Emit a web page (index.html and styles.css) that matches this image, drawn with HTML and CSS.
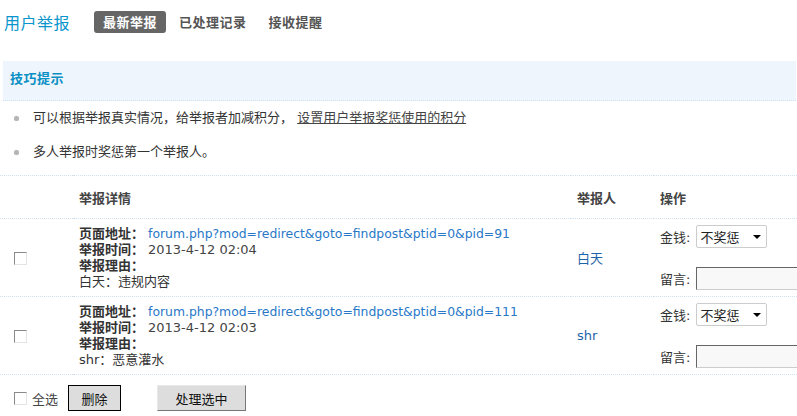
FILE: index.html
```html
<!DOCTYPE html>
<html lang="zh-CN">
<head>
  <meta charset="UTF-8" />
  <title>用户举报</title>
  <link rel="stylesheet" href="styles.css">
</head>
<body>
  <header class="topbar">
    <span class="title">用户举报</span>
    <nav class="tabs">
      <a href="#" class="tab active">最新举报</a>
      <a href="#" class="tab">已处理记录</a>
      <a href="#" class="tab">接收提醒</a>
    </nav>
  </header>

  <div class="tips">技巧提示</div>
  <ul class="tip-list">
    <li>可以根据举报真实情况，给举报者加减积分，&nbsp;<a href="#">设置用户举报奖惩使用的积分</a></li>
    <li>多人举报时奖惩第一个举报人。</li>
  </ul>

  <table class="reports">
    <colgroup>
      <col class="c-check">
      <col class="c-detail">
      <col class="c-user">
      <col class="c-op">
    </colgroup>
    <thead>
      <tr>
        <th></th>
        <th>举报详情</th>
        <th>举报人</th>
        <th>操作</th>
      </tr>
    </thead>
    <tbody>
      <tr>
        <td class="check"><input type="checkbox" class="box"></td>
        <td class="detail">
          <div><b>页面地址：</b><a href="#" class="url">forum.php?mod=redirect&amp;goto=findpost&amp;ptid=0&amp;pid=91</a></div>
          <div><b>举报时间：</b><span class="time">2013-4-12 02:04</span></div>
          <div><b>举报理由：</b></div>
          <div>白天：违规内容</div>
        </td>
        <td class="user"><a href="#">白天</a></td>
        <td class="op">
          <div class="field">金钱: <span class="sel"><select><option>不奖惩</option></select></span></div>
          <div class="field">留言: <input type="text" class="msg"></div>
        </td>
      </tr>
      <tr>
        <td class="check"><input type="checkbox" class="box"></td>
        <td class="detail">
          <div><b>页面地址：</b><a href="#" class="url">forum.php?mod=redirect&amp;goto=findpost&amp;ptid=0&amp;pid=111</a></div>
          <div><b>举报时间：</b><span class="time">2013-4-12 02:03</span></div>
          <div><b>举报理由：</b></div>
          <div>shr：恶意灌水</div>
        </td>
        <td class="user"><a href="#">shr</a></td>
        <td class="op">
          <div class="field">金钱: <span class="sel"><select><option>不奖惩</option></select></span></div>
          <div class="field">留言: <input type="text" class="msg"></div>
        </td>
      </tr>
    </tbody>
  </table>

  <div class="actions">
    <label class="all"><input type="checkbox" class="box"> 全选</label>
    <button class="btn btn-del">删除</button>
    <button class="btn btn-do">处理选中</button>
  </div>
</body>
</html>
```

FILE: styles.css
```css
html, body {
  overflow: hidden;
}
body {
  margin: 0;
  font-family: "DejaVu Sans", "Noto Sans CJK SC", sans-serif;
  font-size: 13px;
  color: #333;
  background: #fff;
}
a {
  text-decoration: none;
}
.topbar {
  display: flex;
  align-items: center;
  height: 22px;
  padding: 11px 4px 0;
}
.title {
  font-family: "Noto Sans CJK SC", sans-serif;
  font-size: 16px;
  letter-spacing: 0.5px;
  color: #0a96cc;
  margin-right: 24px;
}
.tabs {
  display: flex;
  gap: 4px;
}
.tab {
  font-family: "Noto Sans CJK SC", sans-serif;
  font-weight: bold;
  font-size: 13px;
  letter-spacing: 0.5px;
  color: #555;
  line-height: 22px;
  padding: 0 9px;
  border-radius: 3px;
}
.tab.active {
  background: #666;
  color: #fff;
}
.tips {
  margin: 28px 1px 0 3px;
  height: 39px;
  line-height: 36px;
  padding-left: 7px;
  background: #eef5fc;
  border-bottom: 1px dotted #cfe1ef;
  font-weight: bold;
  color: #0a8fc4;
  letter-spacing: 0.5px;
}
.tip-list {
  list-style: none;
  margin: 0 0 6px;
  padding: 0;
}
.tip-list li {
  display: flex;
  align-items: center;
  line-height: 34px;
}
.tip-list li::before {
  content: "";
  width: 5px;
  height: 5px;
  border-radius: 50%;
  background: #b5b5b5;
  box-shadow: 0 0 1px #ccc;
  margin: 0 14px 0 14px;
}
.tip-list a {
  color: #444;
  text-decoration: underline;
}
.reports {
  width: 797px;
  table-layout: fixed;
  border-collapse: collapse;
}
.c-check { width: 73px; }
.c-detail { width: 498px; }
.c-user { width: 83px; }
.c-op { width: 143px; }
.reports th {
  text-align: left;
  font-weight: bold;
  color: #444;
  height: 42px;
  padding: 0 6px;
  border-top: 1px dotted #cfe1ef;
  border-bottom: 1px dotted #cfe1ef;
}
.reports td {
  padding: 0 6px;
  height: 76px;
  vertical-align: middle;
  border-bottom: 1px dotted #cfe1ef;
  white-space: nowrap;
}
.reports td.check {
  padding-left: 14px;
}
.detail {
  line-height: 16px;
  padding-top: 1px !important;
}
.detail b {
  color: #333;
  margin-right: 4px;
}
.url {
  color: #2878c8;
  font-size: 12.4px;
}
.time {
  color: #444;
}
.user a {
  color: #1d63a8;
}
.reports td.op {
  overflow: visible;
}
.field {
  display: flex;
  align-items: center;
  gap: 6px;
}
.field + .field {
  margin-top: 19px;
}
.sel {
  position: relative;
  display: inline-block;
}
.sel::after {
  content: "";
  position: absolute;
  right: 6px;
  top: 10px;
  border-left: 4px solid transparent;
  border-right: 4px solid transparent;
  border-top: 4px solid #000;
}
.sel select {
  appearance: none;
  -webkit-appearance: none;
  width: 71px;
  height: 23px;
  border: 1px solid #ccc;
  border-radius: 2px;
  background: #fff;
  font-family: "Noto Sans CJK SC", sans-serif;
  font-size: 13px;
  color: #222;
  padding: 0 0 0 3px;
}
.msg {
  width: 110px;
  height: 19px;
  padding: 1px;
  border: 1px solid;
  border-color: #666 #ccc #ccc #666;
  background: #f8f8f8;
}
.box {
  appearance: none;
  -webkit-appearance: none;
  width: 13px;
  height: 13px;
  margin: 0;
  border: 1px solid;
  border-color: #8a8a8a #e4e4e4 #e4e4e4 #8a8a8a;
  background: #fff;
  vertical-align: middle;
}
.actions {
  display: flex;
  align-items: center;
  padding: 10px 0 0 14px;
}
.all {
  display: flex;
  align-items: center;
  gap: 5px;
  color: #444;
}
.btn {
  font-family: "Noto Sans CJK SC", sans-serif;
  font-size: 13px;
  color: #111;
  height: 26px;
  background: #ddd;
}
.btn-del {
  width: 53px;
  margin-left: 10px;
  border: 1px solid #000;
}
.btn-do {
  width: 89px;
  margin-left: 36px;
  border: 1px solid;
  border-color: #e8e8e8 #777 #777 #e8e8e8;
}
```
